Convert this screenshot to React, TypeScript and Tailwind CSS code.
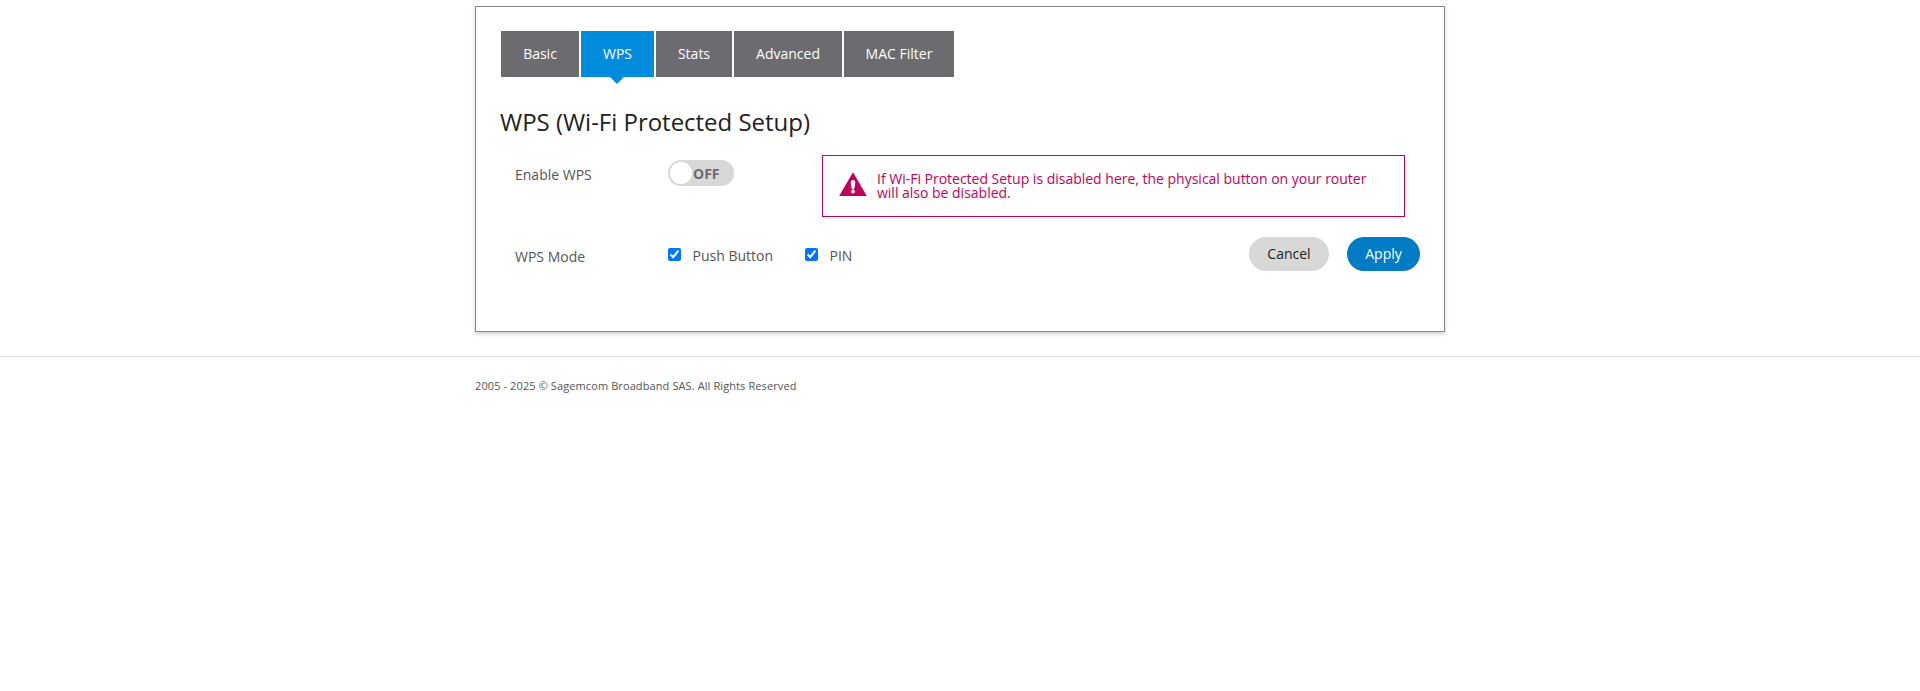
import React from "react";

const tabs = [
  { label: "Basic", width: "w-[78px]" },
  { label: "WPS", width: "w-[73px]", active: true },
  { label: "Stats", width: "w-[76px]" },
  { label: "Advanced", width: "w-[108px]" },
  { label: "MAC Filter", width: "w-[110px]" },
];

function Tabs() {
  return (
    <nav className="flex gap-[2px] pl-[25px]">
      {tabs.map((tab) => (
        <a
          key={tab.label}
          className={`relative flex h-[46px] items-center justify-center whitespace-nowrap pb-[2px] text-[14px] text-white ${tab.width} ${
            tab.active ? "bg-[#008cdd]" : "bg-[#6c6b70]"
          }`}
        >
          {tab.label}
          {tab.active && (
            <span className="absolute left-[29px] top-[46px] h-0 w-0 border-x-[7px] border-t-[7px] border-x-transparent border-t-[#008cdd]" />
          )}
        </a>
      ))}
    </nav>
  );
}

function Toggle() {
  return (
    <button className="flex h-[26px] w-[66px] items-center rounded-full bg-[#d8d8d8] pl-[2px]">
      <span className="h-[22px] w-[22px] rounded-full bg-white" />
      <span className="pl-[1px] pt-[2px] text-[14px] font-bold leading-[20px] text-[#6c6b70]">OFF</span>
    </button>
  );
}

function WarningIcon() {
  return (
    <svg width="28" height="24" viewBox="0 0 28 24" fill="none">
      <path d="M14 0.2L27.8 24H0.2Z" fill="#c3005a" />
      <path d="M14 8c1.500 0 2.200 1 2.200 2.400 0 2.200-.6 4.800-1.100 6.800h-2.200c-.5-2-1.100-4.600-1.100-6.800C11.800 9 12.500 8 14 8Z" fill="#fff" />
      <circle cx="14" cy="19.600" r="1.900" fill="#fff" />
    </svg>
  );
}

function Alert() {
  return (
    <div className="flex h-[62px] w-[583px] border border-[#c3005a] pl-[16px] pt-[16px]">
      <WarningIcon />
      <p className="ml-[10px] w-[500px] text-[14px] leading-[14px] tracking-[-0.01px] text-[#c3005a]">
        If Wi-Fi Protected Setup is disabled here, the physical button on your router will also be disabled.
      </p>
    </div>
  );
}

function Option({ label }: { label: string }) {
  return (
    <label className="flex items-start">
      <input type="checkbox" defaultChecked className="m-0 h-[13px] w-[13px]" />
      <span className="ml-[11.5px] whitespace-nowrap text-[14px] leading-[16px]">{label}</span>
    </label>
  );
}

export default function App() {
  return (
    <div className="min-h-[691px] bg-white pt-[6px] font-['Open_Sans',sans-serif] text-[#555555]">
      <main className="mx-auto h-[326px] w-[970px] border border-[#87878b] pt-[24px] shadow-[0_2px_4px_rgba(0,0,0,0.2)]">
        <Tabs />
        <h1 className="ml-[24px] mt-[29px] text-[24px] leading-[32px] tracking-[-0.02px] text-[#222222]">WPS (Wi-Fi Protected Setup)</h1>
        <div className="mt-[17px] flex h-[82px] items-start pl-[39px]">
          <span className="w-[153px] pt-[12px] text-[14px] leading-[16px]">Enable WPS</span>
          <div className="w-[154px] pt-[5px]">
            <Toggle />
          </div>
          <Alert />
        </div>
        <div className="flex items-start pl-[39px]">
          <span className="w-[153px] pt-[12px] text-[14px] leading-[16px]">WPS Mode</span>
          <div className="flex w-[581px] pt-[11px]">
            <div className="w-[137px]">
              <Option label="Push Button" />
            </div>
            <Option label="PIN" />
          </div>
          <div className="flex gap-[18px]">
            <button className="h-[34px] w-[80px] rounded-[17px] bg-[#d8d8d8] pb-[2px] text-[14px] text-[#222222]">Cancel</button>
            <button className="h-[34px] w-[73px] rounded-[17px] bg-[#007bc4] pb-[2px] text-[14px] text-white">Apply</button>
          </div>
        </div>
      </main>
      <footer className="mt-[24px] border-t border-[#dddddd] pt-[21px]">
        <p className="mx-auto w-[970px] text-[11px] leading-[16px] tracking-[0.1px]">2005 - 2025 © Sagemcom Broadband SAS. All Rights Reserved</p>
      </footer>
    </div>
  );
}
